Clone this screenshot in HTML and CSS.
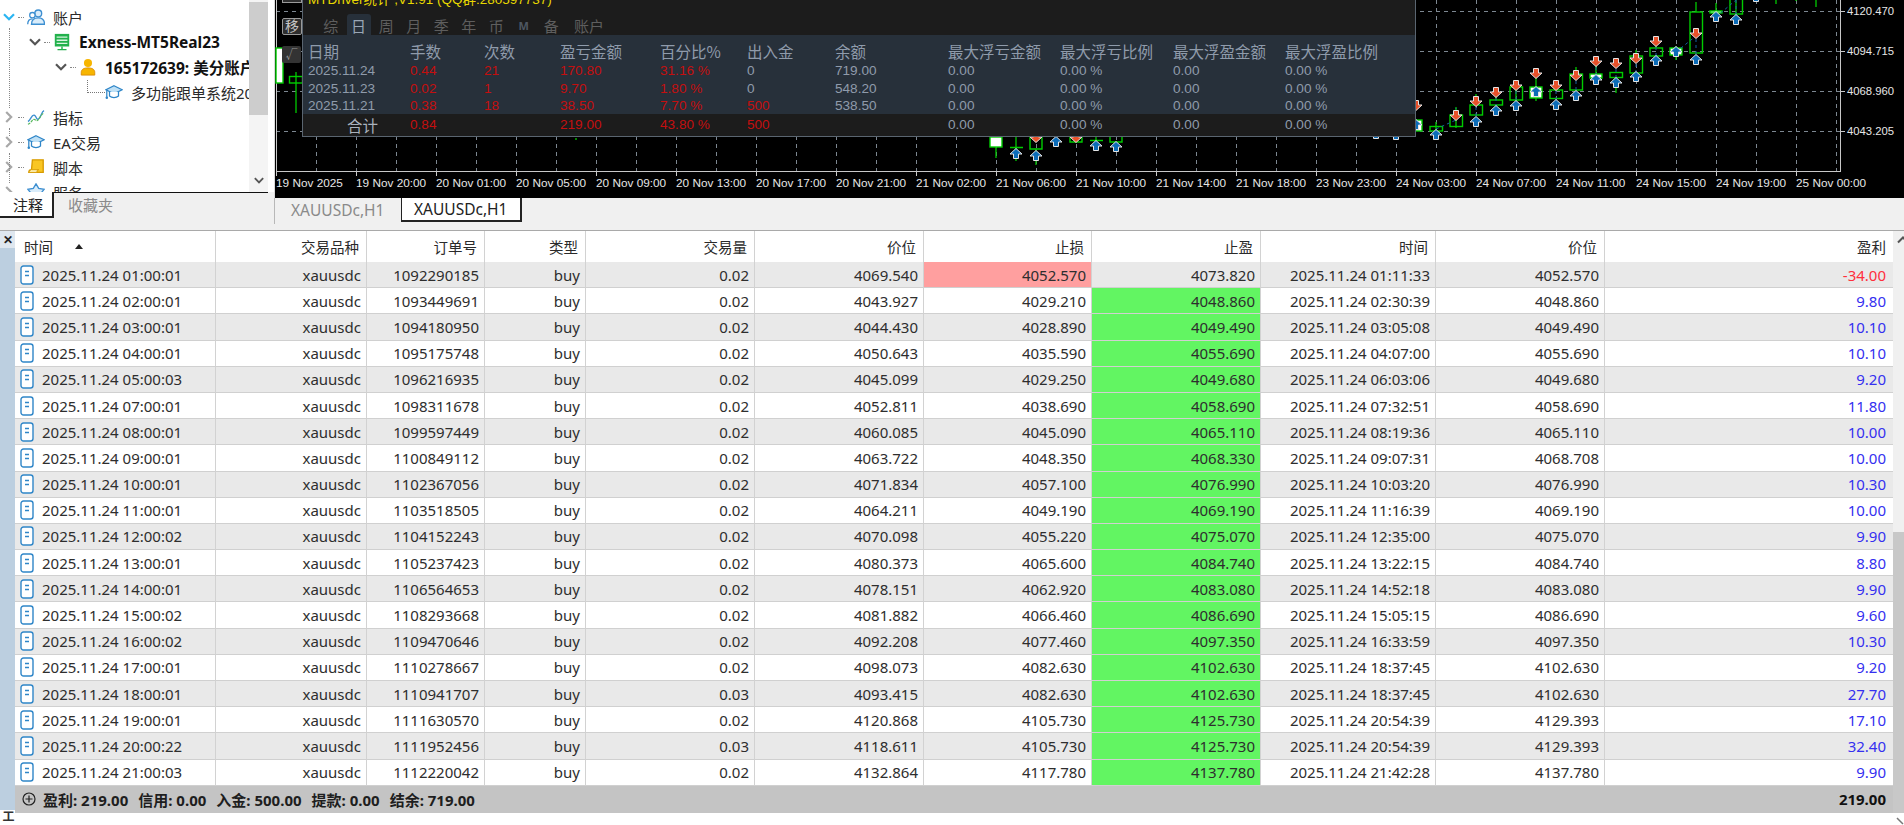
FILE: index.html
```html
<!DOCTYPE html>
<html lang="zh-CN">
<head>
<meta charset="utf-8">
<title>MT5</title>
<link rel="stylesheet" href="styles.css">
</head>
<body>
<svg class="defs" width="0" height="0" aria-hidden="true">
  <defs>
    <symbol id="chev-down" viewBox="0 0 12 8"><path d="M1 1.2 6 6.2 11 1.2" fill="none" stroke="currentColor" stroke-width="2.2"/></symbol>
    <symbol id="chev-right" viewBox="0 0 8 12"><path d="M1.2 1 6.2 6 1.2 11" fill="none" stroke="currentColor" stroke-width="2.2"/></symbol>
    <symbol id="cap" viewBox="0 0 20 18"><path d="M10 2 19 6.5 10 11 1 6.5Z" fill="#bfe0f5" stroke="#2f86c8" stroke-width="1.4"/><path d="M5 9v4.5c2.5 2.2 7.5 2.2 10 0V9" fill="#fff" stroke="#2f86c8" stroke-width="1.4"/><path d="M2 7v7.5" stroke="#2f86c8" stroke-width="1.4"/><circle cx="2" cy="15.5" r="1.4" fill="#2f86c8"/></symbol>
    <symbol id="doc" viewBox="0 0 14 20"><rect x="1" y="1" width="12" height="18" rx="2.5" fill="#fff" stroke="#2f86c8" stroke-width="1.4"/><path d="M5 6.5h4M5 10.5h4" stroke="#2f86c8" stroke-width="1.4"/></symbol>
  </defs>
</svg>

<div class="app">
  <div class="top">
    <div class="nav">
      <div class="tree-wrap">
        <div class="tree">
          <i class="guide guide-a"></i>
          <i class="guide guide-b"></i>
          <i class="guide guide-c"></i>
          <div class="node l0"><svg class="chev chev-on"><use href="#chev-down"/></svg><i class="stub"></i>
            <svg class="ico" viewBox="0 0 20 20"><circle cx="12.5" cy="6" r="3.8" fill="#d9ecfa" stroke="#3d8fd1" stroke-width="1.5"/><path d="M5 18c0-5 3-7 7.500-7s7 2 7 7Z" fill="#d9ecfa" stroke="#3d8fd1" stroke-width="1.500"/><circle cx="6" cy="8" r="3" fill="#fff" stroke="#3d8fd1" stroke-width="1.400"/><path d="M.8 18c0-4 2-6 5.200-6" fill="none" stroke="#3d8fd1" stroke-width="1.500"/></svg>
            <span>账户</span></div>
          <div class="node l1"><svg class="chev"><use href="#chev-down"/></svg><i class="stub"></i>
            <svg class="ico" viewBox="0 0 20 20"><rect x="2" y="1" width="16" height="14" fill="#22b14c"/><path d="M4 4.500h12M4 8h12M4 11.500h12" stroke="#d8f5e0" stroke-width="1.500"/><path d="M10 15v3M5 18.500h10" stroke="#22b14c" stroke-width="1.600"/></svg>
            <b>Exness-MT5Real23</b></div>
          <div class="node l2"><svg class="chev"><use href="#chev-down"/></svg><i class="stub"></i>
            <svg class="ico" viewBox="0 0 20 20"><circle cx="10" cy="5.500" r="4.500" fill="#f7b500"/><path d="M2.500 19v-3c0-3.500 3-5 7.500-5s7.500 1.500 7.500 5v3Z" fill="#f7b500" stroke="#d98a00"/></svg>
            <b>165172639: 美分账户</b></div>
          <div class="node l3"><i class="elbow"></i>
            <svg class="ico"><use href="#cap"/></svg>
            <span>多功能跟单系统2025</span></div>
          <div class="node l0"><svg class="chev chev-off"><use href="#chev-right"/></svg><i class="stub"></i>
            <svg class="ico" viewBox="0 0 20 20"><path d="M1 15c3-1 4-8 7-7s2 6 5 4 3-8 6-9" fill="none" stroke="#3d8fd1" stroke-width="1.500"/><path d="M1 18c4-1 5-7 8-5s3 1 5-2 3-5 5-5" fill="none" stroke="#56b85c" stroke-width="1.300" stroke-dasharray="3 1"/></svg>
            <span>指标</span></div>
          <div class="node l0"><svg class="chev chev-off"><use href="#chev-right"/></svg><i class="stub"></i>
            <svg class="ico"><use href="#cap"/></svg>
            <span>EA交易</span></div>
          <div class="node l0"><svg class="chev chev-off"><use href="#chev-right"/></svg><i class="stub"></i>
            <svg class="ico" viewBox="0 0 20 20"><path d="M6 2h12v14H2c0-2 1-3 3-3Z" fill="#f9c623" stroke="#d79a00" stroke-width="1.500"/><path d="M2 16h9c0-2 .5-3 2-3H5" fill="#fff2b8" stroke="#d79a00"/></svg>
            <span>脚本</span></div>
          <div class="node l0"><svg class="chev chev-off"><use href="#chev-right"/></svg><i class="stub"></i>
            <svg class="ico" viewBox="0 0 20 20"><path d="M10 1 13 6 19 7 15 12 16 18H4L5 12 1 7 7 6Z" fill="#d9ecfa" stroke="#3d8fd1" stroke-width="1.500"/></svg>
            <span>服务</span></div>
        </div>
        <div class="tree-scroll">
          <div class="tree-thumb"></div>
          <svg class="tree-arrow"><use href="#chev-down"/></svg>
        </div>
      </div>
      <div class="nav-tabs">
        <div class="nav-tab is-active">注释</div>
        <div class="nav-tab">收藏夹</div>
      </div>
    </div>

    <div class="main">
      <div class="chart">
        <svg class="plot" width="1629" height="198" viewBox="275 0 1629 198">
          <defs>
            <g id="up"><path d="M0-5.500 6 0H2.500V4.500H-2.500V0H-6Z" fill="#0c6cb8" stroke="#e4e4e4" stroke-width="1"/></g>
            <g id="down"><path d="M0 5.500 6 0H2.500V-4.500H-2.500V0H-6Z" fill="#e8512a" stroke="#e4e4e4" stroke-width="1"/></g>
          </defs>
          <path class="grid" d="M277 11H1841M277 51H1841M277 91H1841M277 131H1841"/>
          <path class="grid" d="M317 0V171M357 0V171M397 0V171M437 0V171M477 0V171M517 0V171M557 0V171M597 0V171M637 0V171M677 0V171M717 0V171M757 0V171M797 0V171M837 0V171M877 0V171M917 0V171M957 0V171M997 0V171M1037 0V171M1077 0V171M1117 0V171M1157 0V171M1197 0V171M1237 0V171M1277 0V171M1317 0V171M1357 0V171M1397 0V171M1437 0V171M1477 0V171M1517 0V171M1557 0V171M1597 0V171M1637 0V171M1677 0V171M1717 0V171M1757 0V171M1797 0V171M1837 0V171"/>
          <path class="axis" d="M277 0V171H1841V0M277 171V176M357 171V176M437 171V176M517 171V176M597 171V176M677 171V176M757 171V176M837 171V176M917 171V176M997 171V176M1077 171V176M1157 171V176M1237 171V176M1317 171V176M1397 171V176M1477 171V176M1557 171V176M1637 171V176M1717 171V176M1797 171V176M1841 11H1846M1841 51H1846M1841 91H1846M1841 131H1846"/>

          <path class="wick" d="M297 72V113M577 138V140M997 147V158M1017 137V161M1037 149V165M1097 137V150M1117 142V152M1437 122V135M1457 107V128M1477 94V105M1497 95V100M1517 85V105M1537 78V101M1557 85V90M1577 67V74M1597 60V85M1617 78V93M1637 50V56M1657 42V48M1677 46V60M1697 2V12M1717 3V11M1737 0V14M1777 0V4M1797 0V1M1817 0V7"/>
          <rect class="body-w" x="277" y="48" width="7" height="35"/>
          <rect class="box" x="290.500" y="76.500" width="13" height="6.500"/>
          <rect class="body-w" x="991" y="137" width="12" height="10"/>
          <path class="box" d="M1011 147.500H1024M1091 140.500H1104"/>
          <path class="box" d="M1031 137V149H1043V137M1071 137V142H1083V137M1111 137V142H1123V137"/>
          <rect class="body-w" x="1415" y="120" width="8" height="11"/>
          <rect class="box" x="1431" y="126.500" width="12.500" height="4.500"/>
          <rect class="box" x="1451" y="115" width="12.500" height="11.500"/>
          <rect class="box" x="1471" y="105" width="12.500" height="10"/>
          <rect class="box" x="1491" y="100" width="12.500" height="5"/>
          <rect class="box" x="1511" y="87" width="12.500" height="13"/>
          <rect class="body-w" x="1531" y="87" width="12" height="11"/>
          <rect class="box" x="1551" y="90" width="12.500" height="8.500"/>
          <rect class="box" x="1571" y="74" width="12.500" height="16"/>
          <rect class="body-w" x="1591" y="74" width="12" height="4"/>
          <rect class="box" x="1611" y="72.500" width="12.500" height="5"/>
          <rect class="box" x="1631" y="56" width="12.500" height="17"/>
          <rect class="box" x="1651" y="48" width="12.500" height="8"/>
          <rect class="body-w" x="1671" y="48" width="12" height="7"/>
          <rect class="box" x="1691" y="12" width="12.500" height="41"/>
          <rect class="body-w" x="1711" y="11" width="12" height="2"/>
          <rect class="box" x="1731" y="-2" width="12.500" height="16"/>

          <path class="trade" d="M1437 129 1457 120M1457 115V108M1477 101V122M1497 92V111M1517 85V106M1557 85V105M1577 75V96M1597 61V80M1617 63V83M1637 58V77M1657 41V61M1677 52 1697 36M1697 33V60M1717 17 1737 0M1737 0V20"/>

          <use href="#up" x="1017" y="154"/><use href="#up" x="1037" y="156"/><use href="#up" x="1057" y="142"/><use href="#up" x="1097" y="146"/><use href="#up" x="1117" y="147"/><use href="#up" x="1377" y="134"/><use href="#up" x="1397" y="135"/>
          <use href="#down" x="1037" y="137"/><use href="#down" x="1077" y="137"/>
          <use href="#down" x="1417" y="105"/><use href="#up" x="1417" y="125"/>
          <use href="#up" x="1437" y="135"/><use href="#down" x="1457" y="115"/>
          <use href="#down" x="1477" y="101"/><use href="#up" x="1477" y="122"/>
          <use href="#down" x="1497" y="92"/><use href="#up" x="1497" y="111"/>
          <use href="#down" x="1517" y="85"/><use href="#up" x="1517" y="106"/>
          <use href="#down" x="1537" y="73"/><use href="#up" x="1537" y="92"/>
          <use href="#down" x="1557" y="85"/><use href="#up" x="1557" y="105"/>
          <use href="#down" x="1577" y="75"/><use href="#up" x="1577" y="96"/>
          <use href="#down" x="1597" y="61"/><use href="#up" x="1597" y="80"/>
          <use href="#down" x="1617" y="63"/><use href="#up" x="1617" y="83"/>
          <use href="#down" x="1637" y="58"/><use href="#up" x="1637" y="77"/>
          <use href="#down" x="1657" y="41"/><use href="#up" x="1657" y="61"/>
          <use href="#up" x="1677" y="52"/>
          <use href="#down" x="1697" y="33"/><use href="#up" x="1697" y="60"/>
          <use href="#up" x="1717" y="17"/><use href="#up" x="1737" y="20"/><use href="#up" x="1757" y="-3"/>

          <g class="tlabels">
            <text x="277" y="187">19 Nov 2025</text><text x="357" y="187">19 Nov 20:00</text><text x="437" y="187">20 Nov 01:00</text><text x="517" y="187">20 Nov 05:00</text><text x="597" y="187">20 Nov 09:00</text><text x="677" y="187">20 Nov 13:00</text><text x="757" y="187">20 Nov 17:00</text><text x="837" y="187">20 Nov 21:00</text><text x="917" y="187">21 Nov 02:00</text><text x="997" y="187">21 Nov 06:00</text><text x="1077" y="187">21 Nov 10:00</text><text x="1157" y="187">21 Nov 14:00</text><text x="1237" y="187">21 Nov 18:00</text><text x="1317" y="187">23 Nov 23:00</text><text x="1397" y="187">24 Nov 03:00</text><text x="1477" y="187">24 Nov 07:00</text><text x="1557" y="187">24 Nov 11:00</text><text x="1637" y="187">24 Nov 15:00</text><text x="1717" y="187">24 Nov 19:00</text><text x="1797" y="187">25 Nov 00:00</text>
          </g>
          <g class="plabels">
            <text x="1848" y="15">4120.470</text><text x="1848" y="55">4094.715</text><text x="1848" y="95">4068.960</text><text x="1848" y="135">4043.205</text>
          </g>
        </svg>

        <div class="chart-btn btn-cut"></div>
        <div class="chart-btn btn-move">移</div>
        <div class="chart-btn btn-check">√</div>

        <div class="stats">
          <div class="stats-title">MTDriver统计 ,V1.91 (QQ群:280597737)</div>
          <div class="stats-tabs">
            <span>综</span><span class="is-active">日</span><span>周</span><span>月</span><span>季</span><span>年</span><span>币</span><span class="tab-m">M</span><span>备</span><span class="tab-wide">账户</span>
          </div>
          <div class="stats-body">
            <div class="stats-row stats-head"><span>日期</span><span>手数</span><span>次数</span><span>盈亏金额</span><span>百分比%</span><span>出入金</span><span>余额</span><span>最大浮亏金额</span><span>最大浮亏比例</span><span>最大浮盈金额</span><span>最大浮盈比例</span></div>
            <div class="stats-row"><span>2025.11.24</span><span class="neg">0.44</span><span class="neg">21</span><span class="neg">170.80</span><span class="neg">31.16 %</span><span>0</span><span>719.00</span><span>0.00</span><span>0.00 %</span><span>0.00</span><span>0.00 %</span></div>
            <div class="stats-row"><span>2025.11.23</span><span class="neg">0.02</span><span class="neg">1</span><span class="neg">9.70</span><span class="neg">1.80 %</span><span>0</span><span>548.20</span><span>0.00</span><span>0.00 %</span><span>0.00</span><span>0.00 %</span></div>
            <div class="stats-row"><span>2025.11.21</span><span class="neg">0.38</span><span class="neg">18</span><span class="neg">38.50</span><span class="neg">7.70 %</span><span class="neg">500</span><span>538.50</span><span>0.00</span><span>0.00 %</span><span>0.00</span><span>0.00 %</span></div>
          </div>
          <div class="stats-row stats-total"><span class="total-label">合计</span><span class="neg">0.84</span><span></span><span class="neg">219.00</span><span class="neg">43.80 %</span><span class="neg">500</span><span></span><span>0.00</span><span>0.00 %</span><span>0.00</span><span>0.00 %</span></div>
        </div>
      </div>
      <div class="chart-tabs">
        <div class="chart-tab">XAUUSDc,H1</div>
        <div class="chart-tab is-active">XAUUSDc,H1</div>
      </div>
    </div>
  </div>

  <div class="bottom">
    <div class="strip">
      <div class="strip-close">✕</div>
      <div class="strip-body"></div>
      <div class="strip-label">工具箱</div>
    </div>
    <div class="table">
      <div class="th th-left">时间<i class="sort"></i></div><div class="th">交易品种</div><div class="th">订单号</div><div class="th">类型</div><div class="th">交易量</div><div class="th">价位</div><div class="th">止损</div><div class="th">止盈</div><div class="th">时间</div><div class="th">价位</div><div class="th">盈利</div>

      <div class="td td-first alt"><svg class="doc"><use href="#doc"/></svg>2025.11.24 01:00:01</div><div class="td alt">xauusdc</div><div class="td alt">1092290185</div><div class="td alt">buy</div><div class="td alt">0.02</div><div class="td alt">4069.540</div><div class="td sl">4052.570</div><div class="td alt">4073.820</div><div class="td alt">2025.11.24 01:11:33</div><div class="td alt">4052.570</div><div class="td alt loss">-34.00</div>
      <div class="td td-first"><svg class="doc"><use href="#doc"/></svg>2025.11.24 02:00:01</div><div class="td">xauusdc</div><div class="td">1093449691</div><div class="td">buy</div><div class="td">0.02</div><div class="td">4043.927</div><div class="td">4029.210</div><div class="td tp">4048.860</div><div class="td">2025.11.24 02:30:39</div><div class="td">4048.860</div><div class="td gain">9.80</div>
      <div class="td td-first alt"><svg class="doc"><use href="#doc"/></svg>2025.11.24 03:00:01</div><div class="td alt">xauusdc</div><div class="td alt">1094180950</div><div class="td alt">buy</div><div class="td alt">0.02</div><div class="td alt">4044.430</div><div class="td alt">4028.890</div><div class="td tp">4049.490</div><div class="td alt">2025.11.24 03:05:08</div><div class="td alt">4049.490</div><div class="td alt gain">10.10</div>
      <div class="td td-first"><svg class="doc"><use href="#doc"/></svg>2025.11.24 04:00:01</div><div class="td">xauusdc</div><div class="td">1095175748</div><div class="td">buy</div><div class="td">0.02</div><div class="td">4050.643</div><div class="td">4035.590</div><div class="td tp">4055.690</div><div class="td">2025.11.24 04:07:00</div><div class="td">4055.690</div><div class="td gain">10.10</div>
      <div class="td td-first alt"><svg class="doc"><use href="#doc"/></svg>2025.11.24 05:00:03</div><div class="td alt">xauusdc</div><div class="td alt">1096216935</div><div class="td alt">buy</div><div class="td alt">0.02</div><div class="td alt">4045.099</div><div class="td alt">4029.250</div><div class="td tp">4049.680</div><div class="td alt">2025.11.24 06:03:06</div><div class="td alt">4049.680</div><div class="td alt gain">9.20</div>
      <div class="td td-first"><svg class="doc"><use href="#doc"/></svg>2025.11.24 07:00:01</div><div class="td">xauusdc</div><div class="td">1098311678</div><div class="td">buy</div><div class="td">0.02</div><div class="td">4052.811</div><div class="td">4038.690</div><div class="td tp">4058.690</div><div class="td">2025.11.24 07:32:51</div><div class="td">4058.690</div><div class="td gain">11.80</div>
      <div class="td td-first alt"><svg class="doc"><use href="#doc"/></svg>2025.11.24 08:00:01</div><div class="td alt">xauusdc</div><div class="td alt">1099597449</div><div class="td alt">buy</div><div class="td alt">0.02</div><div class="td alt">4060.085</div><div class="td alt">4045.090</div><div class="td tp">4065.110</div><div class="td alt">2025.11.24 08:19:36</div><div class="td alt">4065.110</div><div class="td alt gain">10.00</div>
      <div class="td td-first"><svg class="doc"><use href="#doc"/></svg>2025.11.24 09:00:01</div><div class="td">xauusdc</div><div class="td">1100849112</div><div class="td">buy</div><div class="td">0.02</div><div class="td">4063.722</div><div class="td">4048.350</div><div class="td tp">4068.330</div><div class="td">2025.11.24 09:07:31</div><div class="td">4068.708</div><div class="td gain">10.00</div>
      <div class="td td-first alt"><svg class="doc"><use href="#doc"/></svg>2025.11.24 10:00:01</div><div class="td alt">xauusdc</div><div class="td alt">1102367056</div><div class="td alt">buy</div><div class="td alt">0.02</div><div class="td alt">4071.834</div><div class="td alt">4057.100</div><div class="td tp">4076.990</div><div class="td alt">2025.11.24 10:03:20</div><div class="td alt">4076.990</div><div class="td alt gain">10.30</div>
      <div class="td td-first"><svg class="doc"><use href="#doc"/></svg>2025.11.24 11:00:01</div><div class="td">xauusdc</div><div class="td">1103518505</div><div class="td">buy</div><div class="td">0.02</div><div class="td">4064.211</div><div class="td">4049.190</div><div class="td tp">4069.190</div><div class="td">2025.11.24 11:16:39</div><div class="td">4069.190</div><div class="td gain">10.00</div>
      <div class="td td-first alt"><svg class="doc"><use href="#doc"/></svg>2025.11.24 12:00:02</div><div class="td alt">xauusdc</div><div class="td alt">1104152243</div><div class="td alt">buy</div><div class="td alt">0.02</div><div class="td alt">4070.098</div><div class="td alt">4055.220</div><div class="td tp">4075.070</div><div class="td alt">2025.11.24 12:35:00</div><div class="td alt">4075.070</div><div class="td alt gain">9.90</div>
      <div class="td td-first"><svg class="doc"><use href="#doc"/></svg>2025.11.24 13:00:01</div><div class="td">xauusdc</div><div class="td">1105237423</div><div class="td">buy</div><div class="td">0.02</div><div class="td">4080.373</div><div class="td">4065.600</div><div class="td tp">4084.740</div><div class="td">2025.11.24 13:22:15</div><div class="td">4084.740</div><div class="td gain">8.80</div>
      <div class="td td-first alt"><svg class="doc"><use href="#doc"/></svg>2025.11.24 14:00:01</div><div class="td alt">xauusdc</div><div class="td alt">1106564653</div><div class="td alt">buy</div><div class="td alt">0.02</div><div class="td alt">4078.151</div><div class="td alt">4062.920</div><div class="td tp">4083.080</div><div class="td alt">2025.11.24 14:52:18</div><div class="td alt">4083.080</div><div class="td alt gain">9.90</div>
      <div class="td td-first"><svg class="doc"><use href="#doc"/></svg>2025.11.24 15:00:02</div><div class="td">xauusdc</div><div class="td">1108293668</div><div class="td">buy</div><div class="td">0.02</div><div class="td">4081.882</div><div class="td">4066.460</div><div class="td tp">4086.690</div><div class="td">2025.11.24 15:05:15</div><div class="td">4086.690</div><div class="td gain">9.60</div>
      <div class="td td-first alt"><svg class="doc"><use href="#doc"/></svg>2025.11.24 16:00:02</div><div class="td alt">xauusdc</div><div class="td alt">1109470646</div><div class="td alt">buy</div><div class="td alt">0.02</div><div class="td alt">4092.208</div><div class="td alt">4077.460</div><div class="td tp">4097.350</div><div class="td alt">2025.11.24 16:33:59</div><div class="td alt">4097.350</div><div class="td alt gain">10.30</div>
      <div class="td td-first"><svg class="doc"><use href="#doc"/></svg>2025.11.24 17:00:01</div><div class="td">xauusdc</div><div class="td">1110278667</div><div class="td">buy</div><div class="td">0.02</div><div class="td">4098.073</div><div class="td">4082.630</div><div class="td tp">4102.630</div><div class="td">2025.11.24 18:37:45</div><div class="td">4102.630</div><div class="td gain">9.20</div>
      <div class="td td-first alt"><svg class="doc"><use href="#doc"/></svg>2025.11.24 18:00:01</div><div class="td alt">xauusdc</div><div class="td alt">1110941707</div><div class="td alt">buy</div><div class="td alt">0.03</div><div class="td alt">4093.415</div><div class="td alt">4082.630</div><div class="td tp">4102.630</div><div class="td alt">2025.11.24 18:37:45</div><div class="td alt">4102.630</div><div class="td alt gain">27.70</div>
      <div class="td td-first"><svg class="doc"><use href="#doc"/></svg>2025.11.24 19:00:01</div><div class="td">xauusdc</div><div class="td">1111630570</div><div class="td">buy</div><div class="td">0.02</div><div class="td">4120.868</div><div class="td">4105.730</div><div class="td tp">4125.730</div><div class="td">2025.11.24 20:54:39</div><div class="td">4129.393</div><div class="td gain">17.10</div>
      <div class="td td-first alt"><svg class="doc"><use href="#doc"/></svg>2025.11.24 20:00:22</div><div class="td alt">xauusdc</div><div class="td alt">1111952456</div><div class="td alt">buy</div><div class="td alt">0.03</div><div class="td alt">4118.611</div><div class="td alt">4105.730</div><div class="td tp">4125.730</div><div class="td alt">2025.11.24 20:54:39</div><div class="td alt">4129.393</div><div class="td alt gain">32.40</div>
      <div class="td td-first"><svg class="doc"><use href="#doc"/></svg>2025.11.24 21:00:03</div><div class="td">xauusdc</div><div class="td">1112220042</div><div class="td">buy</div><div class="td">0.02</div><div class="td">4132.864</div><div class="td">4117.780</div><div class="td tp">4137.780</div><div class="td">2025.11.24 21:42:28</div><div class="td">4137.780</div><div class="td gain">9.90</div>

      <div class="summary">
        <svg class="plus" viewBox="0 0 14 14"><circle cx="7" cy="7" r="6" fill="none" stroke="#222" stroke-width="1.200"/><path d="M7 3.500v7M3.500 7h7" stroke="#222" stroke-width="1.200"/></svg>
        <div class="summary-items"><span>盈利: 219.00</span><span>信用: 0.00</span><span>入金: 500.00</span><span>提款: 0.00</span><span>结余: 719.00</span></div>
        <span class="summary-total">219.00</span>
      </div>
    </div>
    <div class="vscroll">
      <svg class="vscroll-arrow" viewBox="0 0 11 8"><path d="M5 6.500 10 1.500 15 6.500" fill="none" stroke="#555" stroke-width="2"/></svg>
      <div class="vscroll-thumb"></div>
      <svg class="grip" viewBox="0 0 8 8"><path d="M1 1 7 7" stroke="#777" stroke-width="1.500"/></svg>
    </div>
  </div>
</div>
</body>
</html>
```
FILE: styles.css
```css
* { box-sizing: border-box; }
html, body { margin: 0; padding: 0; background: #fff; }
body { font-family: "Noto Sans", "Noto Sans CJK SC", sans-serif; color: #2a2a2a; overflow: hidden; }
.defs { position: absolute; }
.app { width: 1904px; height: 825px; display: flex; flex-direction: column; overflow: hidden; }

/* top area */
.top { height: 231px; flex: none; display: flex; background: #f0f0f0; border-bottom: 1px solid #a9a9a9; }
.nav { width: 274px; flex: none; display: flex; flex-direction: column; }
.tree-wrap { height: 192px; flex: none; display: flex; background: #fff; padding-right: 6px; }
.tree { position: relative; width: 249px; flex: none; height: 192px; overflow: hidden; padding-top: 4.500px; }
.node { height: 25px; display: flex; align-items: center; white-space: nowrap; font-size: 15px; }
.node span, .node b { margin-left: 8px; font-family: "Noto Sans", "Noto Sans CJK SC", sans-serif; }
.node b { font-weight: 700; color: #111; font-size: 15.500px; }
.l0 { padding-left: 3px; }
.l1 { padding-left: 29px; }
.l2 { padding-left: 55px; }
.l3 { padding-left: 87px; }
.chev { width: 12px; height: 8px; color: #555; flex: none; }
.chev-on { color: #2bb5f2; }
.chev-off { width: 8px; height: 12px; margin: 0 2px; color: #a8a8a8; }
.stub { width: 6px; height: 0; margin: 0 3px; border-top: 1px dotted #888; flex: none; }
.ico { width: 18px; height: 18px; flex: none; }
.elbow { width: 18px; height: 13px; margin-top: -11px; border-left: 1px dotted #777; border-bottom: 1px dotted #777; flex: none; }
.guide { position: absolute; left: 9px; width: 0; border-left: 1px dotted #888; }
.guide-a { top: 28px; height: 80px; }
.guide-b { top: 128px; height: 8px; }
.guide-c { top: 153px; height: 30px; }
.tree-scroll { width: 19px; flex: none; display: flex; flex-direction: column; align-items: center; background: #f4f4f4; padding-top: 2px; }
.tree-thumb { width: 19px; height: 113px; background: #cdcdcd; }
.tree-arrow { width: 10px; height: 7px; margin-top: 62px; color: #555; }
.nav-tabs { height: 39px; flex: none; display: flex; align-items: flex-start; }
.nav-tabs { background: linear-gradient(#111 0 1px, transparent 1px) 0 0 / 268px 100% no-repeat; }
.nav-tab { height: 26px; padding: 0 14px; line-height: 26px; font-size: 15px; color: #8a8a8a; }
.nav-tab.is-active { width: 54px; padding: 0 0 0 13px; background: #fff; color: #222; border-right: 2px solid #222; border-bottom: 2px solid #222; }

.main { flex: 1; min-width: 0; display: flex; flex-direction: column; }
.chart { position: relative; height: 198px; flex: none; background: #000; overflow: hidden; border-left: 1px solid #d8d8d8; }
.plot { display: block; margin-left: -1px; }
.grid { fill: none; stroke: #7d8791; stroke-width: 1; stroke-dasharray: 4 4; shape-rendering: crispEdges; }
.axis { fill: none; stroke: #c8c8c8; stroke-width: 1; shape-rendering: crispEdges; }
.wick { fill: none; stroke: #00c800; stroke-width: 1.300; }
.box { fill: none; stroke: #00cc00; stroke-width: 1.400; }
.body-w { fill: #fff; stroke: #00cc00; stroke-width: 1.400; }
.trade { fill: none; stroke: #15609f; stroke-width: 1; stroke-dasharray: 3 3; }
.tlabels text, .plabels text { fill: #e6e6e6; font-family: "Liberation Sans", sans-serif; font-size: 11.800px; }
.plabels text { font-size: 11.300px; }
.chart-btn { position: absolute; color: #c4c4c4; background: #2e2e2e; text-align: center; }
.btn-cut { left: 7px; top: -10px; width: 20px; height: 13px; border: 1px solid #9a9a9a; }
.btn-move { left: 7px; top: 18px; width: 20px; height: 17px; line-height: 14px; font-size: 14px; border: 1px solid #9a9a9a; border-radius: 2px; }
.btn-check { left: 7px; top: 46px; width: 19px; height: 17px; line-height: 17px; font-size: 12px; color: #999; background: #333; border-radius: 2px; }

.stats { position: absolute; left: 27px; top: -10px; width: 1114px; height: 147px; background: #1c1c1c; border: 1px solid #5a6570; border-width: 0 1px 1px 1px; display: flex; flex-direction: column; overflow: hidden; }
.stats-title { height: 22px; padding-left: 5px; font-family: "Liberation Sans", "Noto Sans CJK SC", sans-serif; font-size: 13.500px; line-height: 19px; color: #e8d800; white-space: nowrap; }
.stats-tabs { height: 24px; padding: 3px 0 0 14px; display: flex; align-items: stretch; font-size: 15px; color: #5e5e5e; }
.stats-tabs span { width: 27.500px; text-align: center; line-height: 24px; }
.stats-tabs .is-active { color: #9aa6b5; background: #27303a; border-radius: 3px 3px 0 0; width: 24px; margin: 0 2px; }
.stats-tabs .tab-m { font-size: 11px; font-weight: 700; color: #4e5762; }
.stats-tabs .tab-wide { width: 36px; margin-left: 6px; }
.stats-body { height: 79px; flex: none; background: #27303a; padding-top: 5px; }
.stats-row { display: grid; grid-template-columns: 102px 74px 76px 100px 87px 88px 113px 112px 113px 112px 100px; padding-left: 5px; height: 17.500px; line-height: 17.500px; font-family: "Liberation Sans", "Noto Sans CJK SC", sans-serif; font-size: 13.600px; color: #8f9bab; white-space: nowrap; }
.stats-row.stats-head { height: 22px; line-height: 22px; font-size: 15.500px; font-family: "Noto Sans CJK SC", sans-serif; }
.stats-row .neg { color: #c40f0f; }
.stats-total { height: 22px; line-height: 22px; }
.total-label { color: #aab2bc; font-size: 15.500px; padding-left: 39px; font-family: "Noto Sans CJK SC", sans-serif; }

.chart-tabs { flex: 1; display: flex; align-items: flex-start; border-left: 1px solid #b8b8b8; margin-bottom: 6px; }
.chart-tab { height: 25px; width: 126px; padding-left: 16px; line-height: 25px; font-size: 15.500px; color: #8a8a8a; }
.chart-tab.is-active { width: 121px; padding-left: 12px; margin-top: -1px; color: #222; background: #fff; border: 1px solid #222; border-width: 1px 2px 2px 1px; line-height: 22px; }

/* bottom area */
.bottom { flex: 1; min-height: 0; display: flex; align-items: stretch; }
.strip { width: 15px; flex: none; display: flex; flex-direction: column; overflow: hidden; }
.strip-close { height: 19px; line-height: 17px; font-size: 12px; font-weight: 700; text-align: center; background: #dfe7ef; color: #222; }
.strip-body { height: 562px; flex: none; background: #bccfe0; }
.strip-label { writing-mode: vertical-rl; font-size: 12px; line-height: 15px; color: #333; font-weight: 700; }

.table { width: 1878px; flex: none; display: grid; grid-template-columns: 201px 151px 118px 101px 169px 169px 168px 169px 175px 169px 288px; grid-template-rows: 31px repeat(20, 26.200px) 27px; align-content: start; font-size: 15px; }
.th, .td { display: flex; align-items: center; justify-content: flex-end; padding-right: 5px; border-right: 1px solid #d2d2d2; white-space: nowrap; overflow: hidden; }
.th { padding-right: 7px; background: #fff; font-size: 14.500px; }
.th-left { justify-content: flex-start; padding-left: 9px; }
.sort { width: 0; height: 0; margin-left: 22px; border: 4px solid transparent; border-top: 0; border-bottom: 5px solid #222; }
.td { border-bottom: 1px solid #d0d0d0; background: #fff; color: #2e2e2e; }
.td-first { justify-content: flex-start; padding-left: 5px; }
.doc { width: 14px; height: 20px; margin-right: 8px; flex: none; }
.alt { background: #e9e9e9; }
.sl { background: #ff9f9f; }
.tp { background: #62f562; }
.loss { color: #ff2f3c; padding-right: 7px; }
.gain { color: #3530f0; padding-right: 7px; }
.th:nth-child(11), .td:nth-child(11n) { border-right: 0; }
.summary { grid-column: 1 / -1; display: flex; align-items: center; background: #c4c4c4; font-weight: 700; padding: 0 7px 0 7px; white-space: nowrap; color: #1e1e1e; font-size: 15px; }
.plus { width: 14px; height: 14px; flex: none; margin-right: 7px; }
.summary-items { display: flex; gap: 10px; flex: 1; }
.summary-total { color: #111; }
.vscroll { position: relative; flex: 1; background: #f0f0f0; display: flex; flex-direction: column; height: 582px; }
.vscroll-arrow { width: 11px; height: 8px; margin-top: 5px; flex: none; }
.vscroll-thumb { margin-top: 288px; flex: 1; background: #c8c8c8; }
.grip { position: absolute; right: 0; top: 586px; width: 8px; height: 8px; }
```
